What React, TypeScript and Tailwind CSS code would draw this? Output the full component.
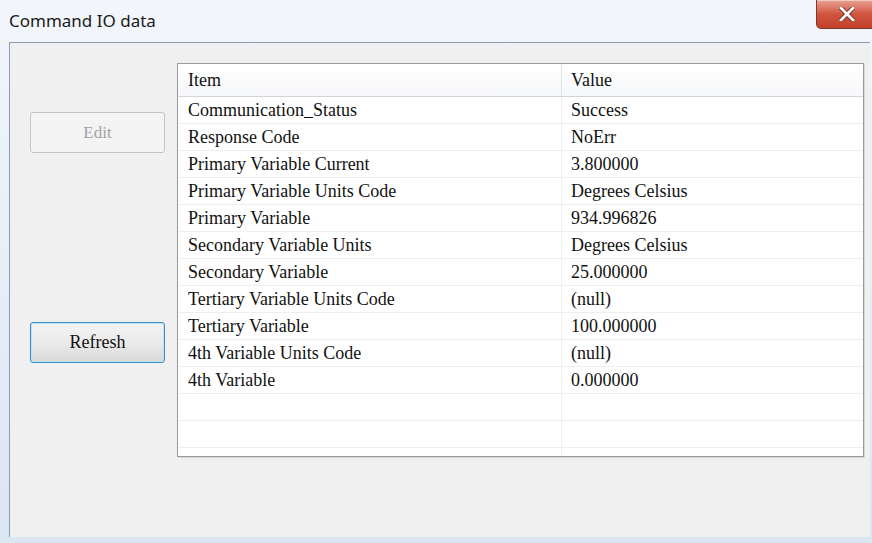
import React from "react";

type Row = { item: string; value: string };

const rows: Row[] = [
  { item: "Communication_Status", value: "Success" },
  { item: "Response Code", value: "NoErr" },
  { item: "Primary Variable Current", value: "3.800000" },
  { item: "Primary Variable Units Code", value: "Degrees Celsius" },
  { item: "Primary Variable", value: "934.996826" },
  { item: "Secondary Variable Units", value: "Degrees Celsius" },
  { item: "Secondary Variable", value: "25.000000" },
  { item: "Tertiary Variable Units Code", value: "(null)" },
  { item: "Tertiary Variable", value: "100.000000" },
  { item: "4th Variable Units Code", value: "(null)" },
  { item: "4th Variable", value: "0.000000" },
  { item: "", value: "" },
  { item: "", value: "" },
  { item: "", value: "" },
];

function CloseButton() {
  return (
    <div className="w-[62px] h-[29px] -mr-[6px] rounded-bl-[5px] border border-[#7a3a2f] border-t-0 bg-gradient-to-b from-[#e8a093] via-[#d0553f] to-[#c2412a] flex items-center justify-center shadow-[inset_0_1px_0_rgba(255,255,255,0.45)]">
      <svg width="16" height="14" viewBox="0 0 16 14">
        <path d="M2 1 L14 13 M14 1 L2 13" stroke="#6b2a20" strokeWidth="4.5" strokeLinecap="square" />
        <path d="M2 1 L14 13 M14 1 L2 13" stroke="#ffffff" strokeWidth="2.8" strokeLinecap="square" />
      </svg>
    </div>
  );
}

export default function App() {
  return (
    <div className="w-[872px] h-[543px] overflow-hidden bg-gradient-to-b from-[#f3f6fb] via-[#e6eef8] to-[#dbe6f3] flex flex-col">
      {/* title bar */}
      <div className="h-[42px] flex items-start justify-between pl-[9px]">
        <span className="mt-[8px] text-[17px] text-[#1a1a1a] font-['Noto_Sans',sans-serif]">
          Command IO data
        </span>
        <CloseButton />
      </div>

      {/* client area */}
      <div className="flex-1 ml-[9px] mr-[2px] mb-[6px] border-l border-t border-[#8b9db5] bg-[#f0f0f0] flex gap-[12px] pl-[20px] pt-[20px] font-['Liberation_Serif',serif]">
        <div className="w-[135px] flex flex-col gap-[169px] pt-[49px]">
          <button className="h-[41px] rounded-[3px] border border-[#c4c4c4] bg-[#f4f4f4] text-[17px] text-[#a3a3a3] font-['Liberation_Serif',serif]">
            Edit
          </button>
          <button className="h-[41px] rounded-[3px] border border-[#3a8ec4] bg-gradient-to-b from-[#f4f4f4] via-[#ebebeb] to-[#d9d9d9] text-[18px] text-[#111] shadow-[inset_0_0_0_1px_#bfe3f7] font-['Liberation_Serif',serif]">
            Refresh
          </button>
        </div>

        <div className="w-[687px] h-[394px] overflow-hidden border border-[#9a9a9a] bg-white shadow-[1px_1px_0_#d8d8d8]">
          <div className="h-[33px] flex border-b border-[#d5d5d5] bg-gradient-to-b from-white to-[#f6f7f9] text-[18px] text-[#111]">
            <div className="w-[384px] pl-[10px] flex items-center border-r border-[#e3e3e3]">Item</div>
            <div className="flex-1 pl-[9px] flex items-center">Value</div>
          </div>
          {rows.map((r, i) => (
            <div key={i} className="h-[27px] flex border-b border-[#efefef] text-[18px] text-[#111]">
              <div className="w-[384px] pl-[10px] flex items-center border-r border-[#f0f0f0] whitespace-nowrap">{r.item}</div>
              <div className="flex-1 pl-[9px] flex items-center whitespace-nowrap">{r.value}</div>
            </div>
          ))}
        </div>
      </div>
    </div>
  );
}
